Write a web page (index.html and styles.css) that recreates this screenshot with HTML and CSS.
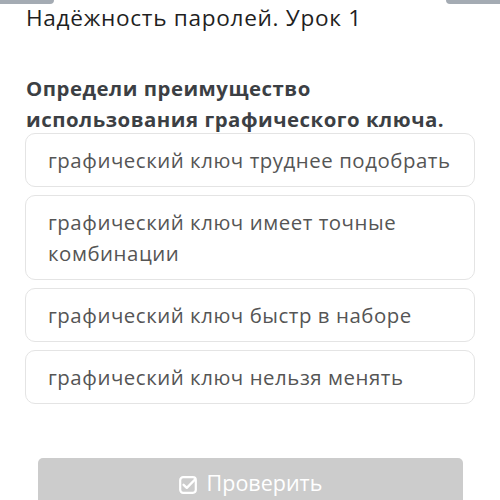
FILE: index.html
```html
<!DOCTYPE html>
<html lang="ru">
<head>
<meta charset="utf-8">
<link rel="stylesheet" href="styles.css">
</head>
<body>
<div class="topbar">
  <span class="tab tab-left"></span>
  <span class="tab tab-right"></span>
</div>
<main class="page">
  <h1 class="title">Надёжность паролей. Урок 1</h1>
  <h2 class="question">Определи преимущество использования графического ключа.</h2>
  <div class="options">
    <div class="option">графический ключ труднее подобрать</div>
    <div class="option">графический ключ имеет точные комбинации</div>
    <div class="option">графический ключ быстр в наборе</div>
    <div class="option">графический ключ нельзя менять</div>
  </div>
  <button class="check">
    <svg class="icon" width="18" height="18" viewBox="0 0 18 18" aria-hidden="true">
      <rect x="1.2" y="1.2" width="15.6" height="15.6" rx="3" fill="none" stroke="#fff" stroke-width="2.2"/>
      <path d="M4.6 8.8 L7.8 11.8 L15.5 4" fill="none" stroke="#fff" stroke-width="2.4" stroke-linecap="round" stroke-linejoin="round"/>
    </svg>
    <span>Проверить</span>
  </button>
</main>
</body>
</html>
```
FILE: styles.css
```css
html, body {
  margin: 0;
  padding: 0;
  background: #ffffff;
  font-family: "Open Sans", "Noto Sans", sans-serif;
  width: 500px;
  height: 500px;
  overflow: hidden;
}

.topbar {
  height: 0;
  position: relative;
}

.tab {
  position: absolute;
  top: 0;
  height: 4px;
  width: 54px;
  background: #a4abb3;
}

.tab-left {
  left: 0;
  border-bottom-right-radius: 4px;
}

.tab-right {
  right: 0;
  border-bottom-left-radius: 4px;
}

.page {
  padding: 3px 25px 0 25px;
  display: flex;
  flex-direction: column;
}

.title {
  margin: 0 0 0 1px;
  font-size: 22.6px;
  line-height: 30px;
  font-weight: 400;
  letter-spacing: 0.7px;
  color: #1f1f1f;
}

.question {
  margin: 40px 0 0 1px;
  max-width: 430px;
  font-size: 20.4px;
  line-height: 31px;
  font-weight: 700;
  letter-spacing: 0.5px;
  color: #3c3f44;
}

.options {
  margin-top: -2px;
  display: flex;
  flex-direction: column;
  gap: 8px;
}

.option {
  border: 1px solid #e4e4e4;
  border-radius: 10px;
  padding: 11px 22px 10px 22px;
  font-size: 20.4px;
  line-height: 31px;
  letter-spacing: 0.55px;
  color: #555555;
}

.check {
  margin: 54px 12px 0 13px;
  height: 60px;
  border: none;
  border-radius: 5px;
  background: #cccccc;
  color: #ffffff;
  font-family: "Open Sans", "Noto Sans", sans-serif;
  font-size: 21.5px;
  display: flex;
  align-items: flex-start;
  justify-content: center;
  gap: 10px;
  padding: 10px 0 0 0;
}

.check span {
  line-height: 30px;
}

.icon {
  margin-top: 8px;
}
```
